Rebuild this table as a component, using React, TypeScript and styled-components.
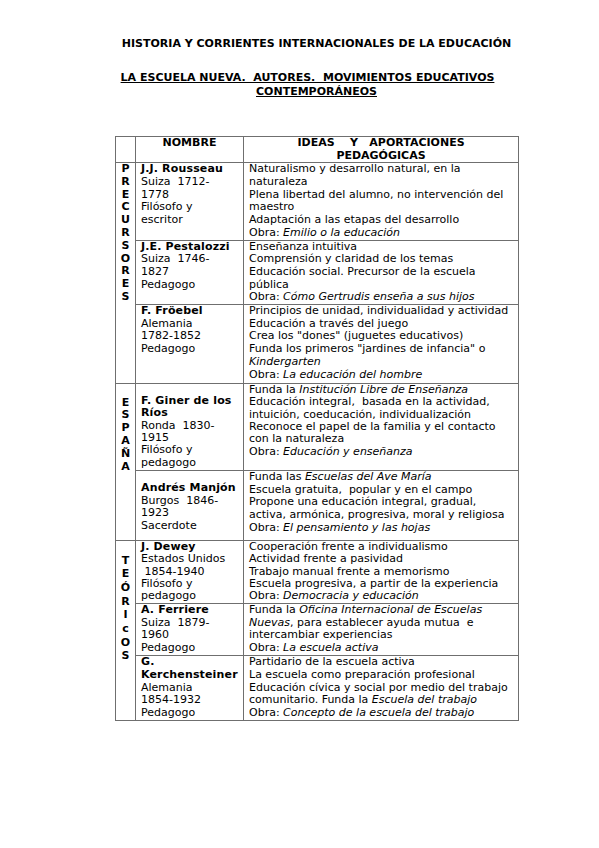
import React from "react";
import styled, { createGlobalStyle } from "styled-components";

const Global = createGlobalStyle`
  html, body { margin: 0; padding: 0; background: #fff; }
  body { font-family: "DejaVu Sans", Verdana, sans-serif; color: #000; }
`;

const Page = styled.div`
  width: 599px;
  height: 848px;
  box-sizing: border-box;
  padding: 37px 0 0 115px;
  background: #fff;
`;

const Column = styled.div`
  width: 403px;
`;

const Title = styled.h1`
  margin: 0;
  font-size: 11px;
  line-height: 14px;
  font-weight: bold;
  text-align: center;
  white-space: nowrap;
`;

const Subtitle = styled.h2`
  margin: 20px 0 0;
  font-size: 11px;
  line-height: 14px;
  font-weight: bold;
  text-align: center;
  white-space: pre;
`;

const SubLine = styled.span<{ $shift?: number }>`
  display: inline-block;
  text-decoration: underline;
  margin-right: ${(p) => p.$shift ?? 0}px;
`;

const Table = styled.table`
  margin-top: 37px;
  width: 403px;
  border-collapse: collapse;
  table-layout: fixed;
  font-size: 11px;
  line-height: 12.8px;
`;

const Cell = styled.td<{ $h?: number; $lh?: number }>`
  border: 1px solid #6f6f6f;
  padding: 0 0 0 5px;
  vertical-align: top;
  height: ${(p) => (p.$h ? `${p.$h - 1}px` : "auto")};
  line-height: ${(p) => p.$lh ?? 12.8}px;
  box-sizing: border-box;
  white-space: pre;
  overflow: hidden;
`;

const GroupCell = styled.td<{ $lh?: number }>`
  border: 1px solid #6f6f6f;
  padding: 0;
  vertical-align: top;
  text-align: center;
  font-weight: bold;
  line-height: ${(p) => p.$lh ?? 12.8}px;
`;

const HeadCell = styled.th`
  border: 1px solid #6f6f6f;
  padding: 0;
  height: 25px;
  line-height: 12.5px;
  vertical-align: top;
  font-weight: bold;
  text-align: center;
  white-space: pre;
`;

const Line = styled.div<{ $bold?: boolean }>`
  font-weight: ${(p) => (p.$bold ? "bold" : "normal")};
  letter-spacing: ${(p) => (p.$bold ? "0.15px" : "0")};
  min-height: 1em;
`;

const Letter = styled.div``;

const I = styled.em`
  font-style: italic;
`;

type Entry = {
  h: number;
  lh?: number;
  name: { t: string; b?: boolean }[];
  ideas: React.ReactNode[];
};

const B = (t: string) => ({ t, b: true });
const N = (t: string) => ({ t });

const precursores: Entry[] = [
  {
    h: 77,
    name: [B("J.J. Rousseau"), N("Suiza  1712-"), N("1778"), N("Filósofo y"), N("escritor")],
    ideas: [
      "Naturalismo y desarrollo natural, en la",
      "naturaleza",
      "Plena libertad del alumno, no intervención del",
      "maestro",
      "Adaptación a las etapas del desarrollo",
      <>Obra: <I>Emilio o la educación</I></>,
    ],
  },
  {
    h: 64,
    lh: 12.6,
    name: [B("J.E. Pestalozzi"), N("Suiza  1746-"), N("1827"), N("Pedagogo")],
    ideas: [
      "Enseñanza intuitiva",
      "Comprensión y claridad de los temas",
      "Educación social. Precursor de la escuela",
      "pública",
      <>Obra: <I>Cómo Gertrudis enseña a sus hijos</I></>,
    ],
  },
  {
    h: 80,
    name: [B("F. Fröebel"), N("Alemania"), N("1782-1852"), N("Pedagogo")],
    ideas: [
      "Principios de unidad, individualidad y actividad",
      "Educación a través del juego",
      "Crea los \"dones\" (juguetes educativos)",
      "Funda los primeros \"jardines de infancia\" o",
      <I>Kindergarten</I>,
      <>Obra: <I>La educación del hombre</I></>,
    ],
  },
];

const espana: Entry[] = [
  {
    h: 88,
    lh: 12.4,
    name: [N(""), B("F. Giner de los"), B("Ríos"), N("Ronda  1830-"), N("1915"), N("Filósofo y"), N("pedagogo")],
    ideas: [
      <>Funda la <I>Institución Libre de Enseñanza</I></>,
      "Educación integral,  basada en la actividad,",
      "intuición, coeducación, individualización",
      "Reconoce el papel de la familia y el contacto",
      "con la naturaleza",
      <>Obra: <I>Educación y enseñanza</I></>,
    ],
  },
  {
    h: 71,
    name: [N(""), B("Andrés Manjón"), N("Burgos  1846-"), N("1923"), N("Sacerdote")],
    ideas: [
      <>Funda las <I>Escuelas del Ave María</I></>,
      "Escuela gratuita,  popular y en el campo",
      "Propone una educación integral, gradual,",
      "activa, armónica, progresiva, moral y religiosa",
      <>Obra: <I>El pensamiento y las hojas</I></>,
    ],
  },
];

const teoricos: Entry[] = [
  {
    h: 63,
    lh: 12.4,
    name: [B("J. Dewey"), N("Estados Unidos"), N(" 1854-1940"), N("Filósofo y"), N("pedagogo")],
    ideas: [
      "Cooperación frente a individualismo",
      "Actividad frente a pasividad",
      "Trabajo manual frente a memorismo",
      "Escuela progresiva, a partir de la experiencia",
      <>Obra: <I>Democracia y educación</I></>,
    ],
  },
  {
    h: 52,
    name: [B("A. Ferriere"), N("Suiza  1879-"), N("1960"), N("Pedagogo")],
    ideas: [
      <>Funda la <I>Oficina Internacional de Escuelas</I></>,
      <><I>Nuevas</I>, para establecer ayuda mutua  e</>,
      "intercambiar experiencias",
      <>Obra: <I>La escuela activa</I></>,
    ],
  },
  {
    h: 66,
    lh: 12.8,
    name: [B("G."), B("Kerchensteiner"), N("Alemania"), N("1854-1932"), N("Pedagogo")],
    ideas: [
      "Partidario de la escuela activa",
      "La escuela como preparación profesional",
      "Educación cívica y social por medio del trabajo",
      <>comunitario. Funda la <I>Escuela del trabajo</I></>,
      <>Obra: <I>Concepto de la escuela del trabajo</I></>,
    ],
  },
];

type Group = { letters: string[]; lead: number; lh?: number; entries: Entry[] };

const groups: Group[] = [
  { letters: "PRECURSORES".split(""), lead: 0, entries: precursores },
  { letters: "ESPAÑA".split(""), lead: 1, entries: espana },
  { letters: ["T", "E", "Ó", "R", "I", "c", "O", "S"], lead: 1, lh: 13.7, entries: teoricos },
];

const LeadGap = styled.div<{ $n: number }>`
  height: ${(p) => p.$n * 12.8}px;
`;

export default function App() {
  return (
    <>
      <Global />
      <Page>
        <Column>
          <Title>HISTORIA Y CORRIENTES INTERNACIONALES DE LA EDUCACIÓN</Title>
          <Subtitle>
            <SubLine $shift={18}>LA ESCUELA NUEVA.  AUTORES.  MOVIMIENTOS EDUCATIVOS</SubLine>
            {"\n"}
            <SubLine>CONTEMPORÁNEOS</SubLine>
          </Subtitle>
          <Table>
            <colgroup>
              <col style={{ width: 20 }} />
              <col style={{ width: 108 }} />
              <col style={{ width: 275 }} />
            </colgroup>
            <thead>
              <tr>
                <HeadCell />
                <HeadCell>NOMBRE</HeadCell>
                <HeadCell>{"IDEAS    Y   APORTACIONES\nPEDAGÓGICAS"}</HeadCell>
              </tr>
            </thead>
            <tbody>
              {groups.map((g) =>
                g.entries.map((e, i) => (
                  <tr key={g.letters.join("") + i}>
                    {i === 0 && (
                      <GroupCell rowSpan={g.entries.length} $lh={g.lh}>
                        <LeadGap $n={g.lead} />
                        {g.letters.map((l, k) => (
                          <Letter key={k}>{l}</Letter>
                        ))}
                      </GroupCell>
                    )}
                    <Cell $h={e.h} $lh={e.lh}>
                      {e.name.map((n, k) => (
                        <Line key={k} $bold={n.b}>
                          {n.t}
                        </Line>
                      ))}
                    </Cell>
                    <Cell $h={e.h} $lh={e.lh}>
                      {e.ideas.map((t, k) => (
                        <Line key={k}>{t}</Line>
                      ))}
                    </Cell>
                  </tr>
                ))
              )}
            </tbody>
          </Table>
        </Column>
      </Page>
    </>
  );
}
